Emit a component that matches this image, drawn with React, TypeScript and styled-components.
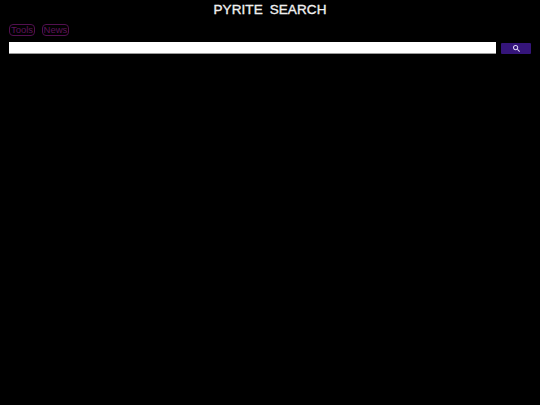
import { createGlobalStyle } from "styled-components";
import styled from "styled-components";

const GlobalStyle = createGlobalStyle`
  html, body {
    margin: 0;
    padding: 0;
    background: #000;
  }
`;

const Page = styled.div`
  width: 540px;
  height: 405px;
  overflow: hidden;
  background: #000;
  font-family: "Liberation Sans", Arial, sans-serif;
`;

const Title = styled.h1`
  margin: 0;
  padding-top: 3px;
  height: 24px;
  box-sizing: border-box;
  text-align: center;
  color: #f0f0f0;
  font-family: "Liberation Sans", Arial, sans-serif;
  font-size: 13.5px;
  line-height: 13px;
  font-weight: 400;
  letter-spacing: 0.1px;
  word-spacing: 3px;
  -webkit-text-stroke: 0.35px #f0f0f0;
`;

const Nav = styled.nav`
  display: flex;
  gap: 7px;
  padding: 0 9px;
  height: 18px;
  box-sizing: border-box;
`;

const NavLink = styled.a<{ $width: number }>`
  display: flex;
  align-items: center;
  justify-content: center;
  width: ${(p) => p.$width}px;
  height: 12px;
  box-sizing: border-box;
  border: 1px solid #52104f;
  border-radius: 4px;
  color: #5c1359;
  font-size: 9.5px;
  line-height: 10px;
`;

const SearchRow = styled.form`
  display: flex;
  align-items: center;
  gap: 5px;
  padding: 0 9px;
`;

const SearchInput = styled.input`
  width: 487px;
  height: 12px;
  box-sizing: border-box;
  padding: 0;
  border: 0;
  border-bottom: 1px solid #999;
  background: #fff;
  outline: none;
`;

const SearchButton = styled.button`
  display: flex;
  align-items: center;
  justify-content: center;
  width: 30px;
  height: 11px;
  padding: 0;
  border: 0;
  border-radius: 1px;
  background: #35157a;
  color: #e4dcf8;
`;

export default function App() {
  return (
    <Page>
      <GlobalStyle />
      <Title>PYRITE SEARCH</Title>
      <Nav>
        <NavLink $width={26}>Tools</NavLink>
        <NavLink $width={27}>News</NavLink>
      </Nav>
      <SearchRow onSubmit={(e) => e.preventDefault()}>
        <SearchInput type="text" />
        <SearchButton type="submit" aria-label="search">
          <svg width="7" height="7" viewBox="0 0 13 13">
            <path
              fill="currentColor"
              d="m4.8495 7.8226c0.82666 0 1.5262-0.29146 2.0985-0.87438 0.57232-0.58292 0.86378-1.2877 0.87438-2.1144 0.010599-0.82666-0.28086-1.5262-0.87438-2.0985-0.59352-0.57232-1.293-0.86378-2.0985-0.87438-0.8055-0.010599-1.5103 0.28086-2.1144 0.87438-0.60414 0.59352-0.8956 1.293-0.87438 2.0985 0.021197 0.8055 0.31266 1.5103 0.87438 2.1144 0.56172 0.60414 1.2665 0.8956 2.1144 0.87438zm4.4695 0.2115 3.681 3.6819-1.259 1.284-3.6817-3.7 0.0019784-0.69479-0.090043-0.098846c-0.87973 0.76087-1.92 1.1413-3.1207 1.1413-1.3553 0-2.5025-0.46363-3.4417-1.3909s-1.4088-2.0686-1.4088-3.4239c0-1.3553 0.4696-2.4966 1.4088-3.4239 0.9392-0.92727 2.0864-1.3969 3.4417-1.4088 1.3553-0.011889 2.4906 0.45771 3.406 1.4088 0.9154 0.95107 1.379 2.0924 1.3909 3.4239 0 1.2126-0.38043 2.2588-1.1413 3.1385l0.098834 0.090049z"
            />
          </svg>
        </SearchButton>
      </SearchRow>
    </Page>
  );
}
